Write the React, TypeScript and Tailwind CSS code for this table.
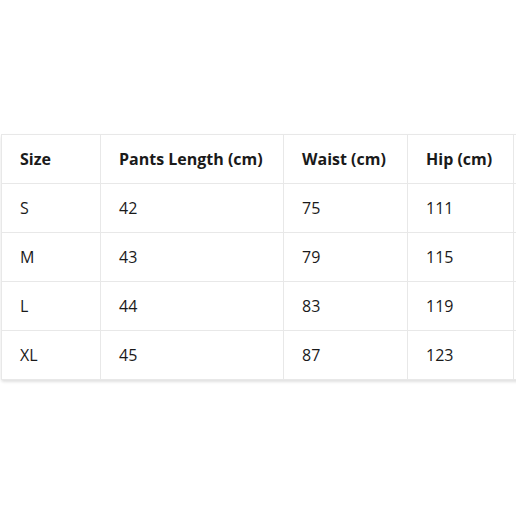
const headers = ['Size', 'Pants Length (cm)', 'Waist (cm)', 'Hip (cm)'];
const rows = [
  ['S', '42', '75', '111'],
  ['M', '43', '79', '115'],
  ['L', '44', '83', '119'],
  ['XL', '45', '87', '123'],
];
const widths = ['w-[99px]', 'w-[183px]', 'w-[124px]', 'w-[106px]'];

export default function App() {
  return (
    <div className="h-[516px] w-[516px] overflow-hidden bg-white pt-[134px] pl-[1px] font-['Open_Sans','Noto_Sans',sans-serif] text-[#1a1a1a]">
      <div className="w-[560px] rounded-[3px] shadow-[0_2px_3px_rgba(0,0,0,0.12)]">
        <table className="w-[560px] table-fixed border-collapse text-[16px]">
          <thead>
            <tr className="h-[49px]">
              {headers.map((h, i) => (
                <th
                  key={h}
                  className={`${widths[i]} border border-[#e8e8e8] px-[18px] text-left font-bold`}
                >
                  {h}
                </th>
              ))}
              <th className="border border-[#e8e8e8]" />
            </tr>
          </thead>
          <tbody>
            {rows.map((r) => (
              <tr key={r[0]} className="h-[49px]">
                {r.map((c, i) => (
                  <td key={i} className="border border-[#e8e8e8] px-[18px]">
                    {c}
                  </td>
                ))}
                <td className="border border-[#e8e8e8]" />
              </tr>
            ))}
          </tbody>
        </table>
      </div>
    </div>
  );
}
